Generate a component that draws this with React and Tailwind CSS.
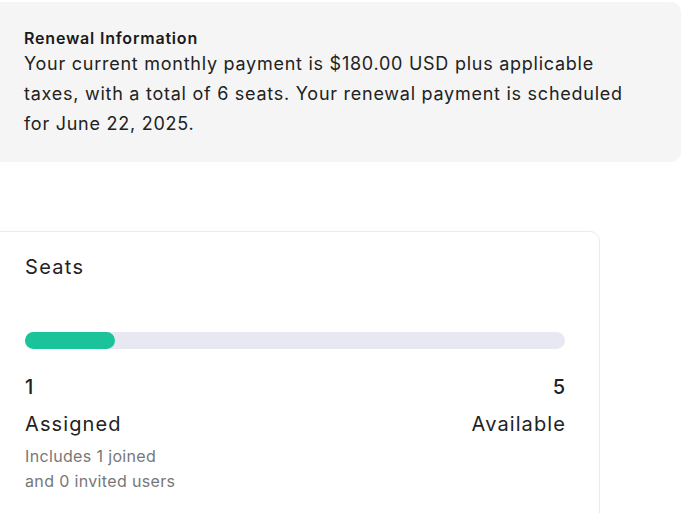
export default function App() {
  return (
    <div className="w-[682px] h-[513px] overflow-hidden bg-white font-['Inter',sans-serif] text-[#1a1a1a]">
      <div className="ml-[-10px] mt-[2px] w-[691px] h-[160px] rounded-r-[10px] bg-[#f5f5f5] pl-[34px] pt-[26px]">
        <p className="text-[16px] leading-[20px] font-semibold tracking-[0.8px]">Renewal Information</p>
        <p className="text-[18px] leading-[30px] text-[#222] mt-[1px] tracking-[0.74px]">
          Your current monthly payment is $180.00 USD plus applicable
          <br />
          taxes, with a total of 6 seats. Your renewal payment is scheduled
          <br />
          for June 22, 2025.
        </p>
      </div>

      <div className="ml-[-10px] mt-[69px] w-[610px] h-[300px] rounded-[10px] border border-[#ebebeb] pl-[34px] pr-[34px] pt-[23px]">
        <p className="text-[20px] leading-[24px] text-[#222] tracking-[1.3px]">Seats</p>
        <div className="mt-[53px] h-[17px] w-[540px] rounded-full bg-[#e8e8f3]">
          <div className="h-full w-[90px] rounded-full bg-[#1bc39a]" />
        </div>
        <div className="mt-[26px] flex w-[540px] justify-between text-[20px] leading-[24px] font-medium text-[#222]">
          <span>1</span>
          <span>5</span>
        </div>
        <div className="mt-[13px] flex w-[540px] justify-between text-[20px] leading-[24px] text-[#222] tracking-[1.1px]">
          <span>Assigned</span>
          <span className="mr-[-1px]">Available</span>
        </div>
        <p className="mt-[8px] text-[16px] leading-[25px] text-[#777] tracking-[0.35px]">
          Includes 1 joined
          <br />
          and 0 invited users
        </p>
      </div>
    </div>
  );
}
